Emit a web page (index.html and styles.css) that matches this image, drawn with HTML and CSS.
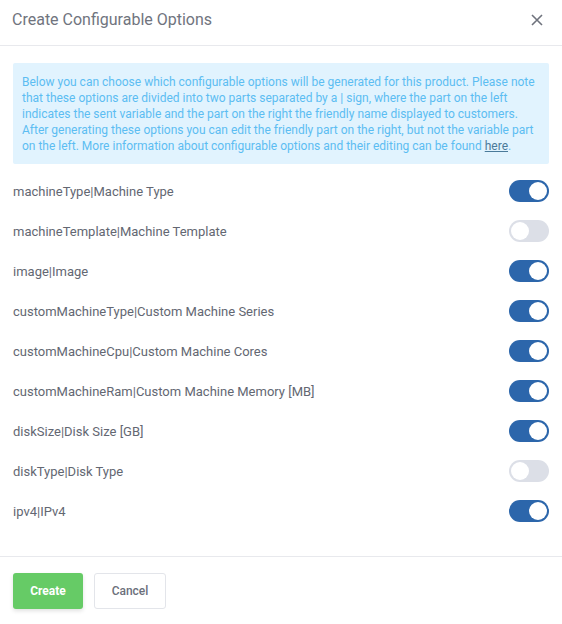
FILE: index.html
```html
<!DOCTYPE html>
<html>
<head>
<meta charset="utf-8">
<link rel="stylesheet" href="styles.css">
</head>
<body>
<div class="modal">
  <div class="header">
    <div class="title">Create Configurable Options</div>
    <svg class="close" width="14" height="14" viewBox="0 0 14 14"><path d="M2 2L12 12M12 2L2 12" stroke="#6f737d" stroke-width="1.6" fill="none"/></svg>
  </div>
  <div class="content">
    <div class="info">Below you can choose which configurable options will be generated for this product. Please note that these options are divided into two parts separated by a | sign, where the part on the left indicates the sent variable and the part on the right the friendly name displayed to customers. After generating these options you can edit the friendly part on the right, but not the variable part on the left. More information about configurable options and their editing can be found <a href="#">here</a>.</div>
    <div class="rows">
      <div class="row"><span>machineType|Machine Type</span><span class="toggle on"><span class="knob"></span></span></div>
      <div class="row"><span>machineTemplate|Machine Template</span><span class="toggle"><span class="knob"></span></span></div>
      <div class="row"><span>image|Image</span><span class="toggle on"><span class="knob"></span></span></div>
      <div class="row"><span>customMachineType|Custom Machine Series</span><span class="toggle on"><span class="knob"></span></span></div>
      <div class="row"><span>customMachineCpu|Custom Machine Cores</span><span class="toggle on"><span class="knob"></span></span></div>
      <div class="row"><span>customMachineRam|Custom Machine Memory [MB]</span><span class="toggle on"><span class="knob"></span></span></div>
      <div class="row"><span>diskSize|Disk Size [GB]</span><span class="toggle on"><span class="knob"></span></span></div>
      <div class="row"><span>diskType|Disk Type</span><span class="toggle"><span class="knob"></span></span></div>
      <div class="row"><span>ipv4|IPv4</span><span class="toggle on"><span class="knob"></span></span></div>
    </div>
  </div>
  <div class="footer">
    <button class="btn primary">Create</button>
    <button class="btn secondary">Cancel</button>
  </div>
</div>
</body>
</html>
```
FILE: styles.css
```css
html, body {
  margin: 0;
  padding: 0;
  background: #fff;
  font-family: Roboto, "Liberation Sans", sans-serif;
}
.modal {
  width: 562px;
  height: 624px;
  display: flex;
  flex-direction: column;
}
.header {
  display: flex;
  align-items: center;
  justify-content: space-between;
  padding: 10px 18px 15px 12px;
  line-height: 20px;
  border-bottom: 1px solid #e8e9ed;
}
.title {
  font-size: 16px;
  color: #70747e;
}
.close {
  display: block;
}
.content {
  padding: 17px 13px 25px 13px;
  border-bottom: 1px solid #e8e9ed;
}
.info {
  background: #e1f3fe;
  color: #5cbdf2;
  font-size: 12px;
  line-height: 16px;
  padding: 11px 9px 10px 9px;
  border-radius: 2px;
}
.info a {
  color: #4a7a9a;
  text-decoration: underline;
}
.rows {
  margin-top: 7px;
  display: flex;
  flex-direction: column;
}
.row {
  height: 40px;
  display: flex;
  align-items: center;
  justify-content: space-between;
  font-size: 13px;
  color: #636772;
}
.toggle {
  width: 40px;
  height: 22px;
  border-radius: 11px;
  background: #dcdfe7;
  display: flex;
  align-items: center;
  padding: 2px;
  box-sizing: border-box;
}
.toggle .knob {
  width: 18px;
  height: 18px;
  border-radius: 50%;
  background: #fff;
}
.toggle.on {
  background: #2c66ab;
  justify-content: flex-end;
}
.footer {
  display: flex;
  gap: 11px;
  padding: 16px 13px;
  align-items: flex-start;
}
.btn {
  font-family: Roboto, "Liberation Sans", sans-serif;
  font-size: 12px;
  font-weight: 700;
  border-radius: 3px;
  cursor: pointer;
}
.primary {
  width: 70px;
  height: 36px;
  background: #66cb66;
  color: #fff;
  border: none;
  box-shadow: 0 2px 4px rgba(0,0,0,0.12);
}
.secondary {
  width: 72px;
  height: 36px;
  background: #fff;
  color: #6c707b;
  border: 1px solid #e3e5ea;
  font-weight: 500;
}
```
